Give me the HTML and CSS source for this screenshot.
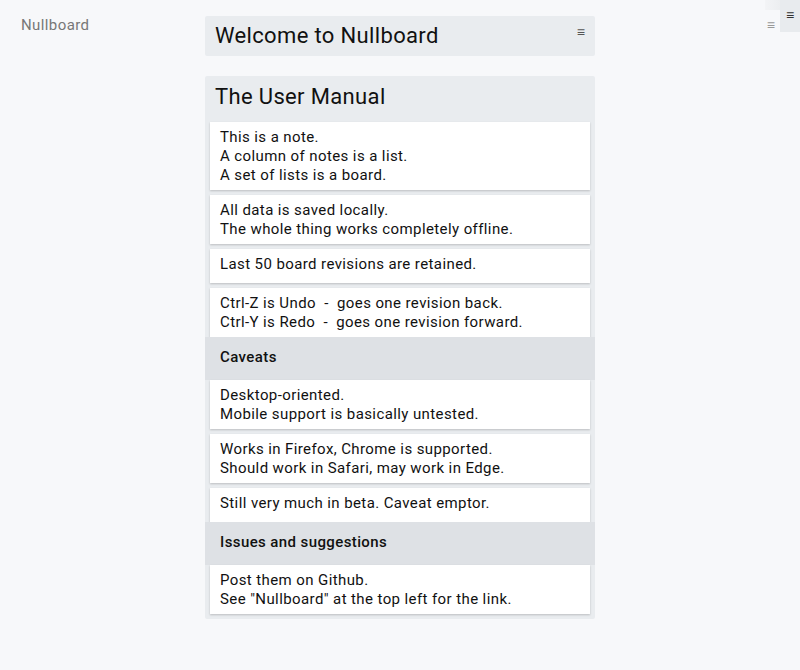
FILE: index.html
```html
<!DOCTYPE html>
<html>
<head>
<meta charset="utf-8">
<link rel="stylesheet" href="styles.css">
</head>
<body>
<a class="logo">Nullboard</a>
<div class="corner">
  <div class="corner-tab"></div>
  <div class="corner-menu">≡</div>
  <div class="corner-dim">≡</div>
</div>
<div class="wrap">
  <div class="board">
    <div class="board-head">
      <div class="board-title">Welcome to Nullboard</div>
      <div class="board-menu">≡</div>
    </div>
    <div class="list">
      <div class="list-head">The User Manual</div>
      <div class="note">This is a note.<br>A column of notes is a list.<br>A set of lists is a board.</div>
      <div class="note">All data is saved locally.<br>The whole thing works completely offline.</div>
      <div class="note">Last 50 board revisions are retained.</div>
      <div class="note">Ctrl-Z is Undo &nbsp;- &nbsp;goes one revision back.<br>Ctrl-Y is Redo &nbsp;- &nbsp;goes one revision forward.</div>
      <div class="group">Caveats</div>
      <div class="note first">Desktop-oriented.<br>Mobile support is basically untested.</div>
      <div class="note">Works in Firefox, Chrome is supported.<br>Should work in Safari, may work in Edge.</div>
      <div class="note">Still very much in beta. Caveat emptor.</div>
      <div class="group">Issues and suggestions</div>
      <div class="note first">Post them on Github.<br>See "Nullboard" at the top left for the link.</div>
    </div>
  </div>
</div>
</body>
</html>
```
FILE: styles.css
```css
html, body {
  margin: 0;
  padding: 0;
  background: #f7f8fa;
  font-family: Roboto, "Liberation Sans", sans-serif;
  color: #111;
  height: 100%;
  letter-spacing: 0.4px;
}
.logo {
  position: absolute;
  left: 21px;
  top: 15px;
  font-size: 15px;
  color: #777;
  line-height: 20px;
}
.corner {
  position: absolute;
  right: 0;
  top: 0;
  width: 40px;
  height: 40px;
  letter-spacing: 0;
}
.corner-tab {
  position: absolute;
  right: 20px;
  top: 0;
  width: 15px;
  height: 10px;
  background: linear-gradient(to right, #f3f4f6, #eceef0);
}
.corner-menu {
  position: absolute;
  right: 0;
  top: 0;
  width: 20px;
  height: 32px;
  background: #e8ebee;
  color: #333;
  font-size: 14px;
  line-height: 30px;
  text-align: center;
}
.corner-dim {
  position: absolute;
  right: 25px;
  top: 15px;
  font-size: 14px;
  color: #999;
  line-height: 20px;
}
.wrap {
  padding-top: 16px;
}
.board {
  width: 390px;
  margin: 0 auto;
}
.board-head {
  height: 40px;
  background: #e9ecef;
  border-radius: 2px;
  display: flex;
  justify-content: space-between;
  align-items: flex-start;
  padding: 0 10px;
}
.board-title {
  font-size: 22px;
  line-height: 40px;
  letter-spacing: 0.35px;
}
.board-menu {
  font-size: 14px;
  color: #555;
  line-height: 18px;
  padding-top: 7px;
  letter-spacing: 0;
}
.list {
  margin-top: 20px;
  background: #e9ecef;
  border-radius: 2px;
  padding: 0 5px 5px;
}
.list-head {
  height: 46px;
  font-size: 22px;
  line-height: 42px;
  padding-left: 5px;
  letter-spacing: 0.35px;
}
.note {
  background: #fff;
  font-size: 15px;
  line-height: 19px;
  padding: 6px 10px 5px;
  min-height: 23px;
  box-shadow: 0 1px 2px rgba(0, 0, 0, 0.2);
  margin-top: 5px;
}
.list-head + .note,
.note.first {
  margin-top: 0;
}
.group {
  margin: 0 -5px;
  height: 43px;
  background: #dee1e5;
  font-size: 15px;
  font-weight: 500;
  line-height: 41px;
  padding-left: 15px;
}
```
